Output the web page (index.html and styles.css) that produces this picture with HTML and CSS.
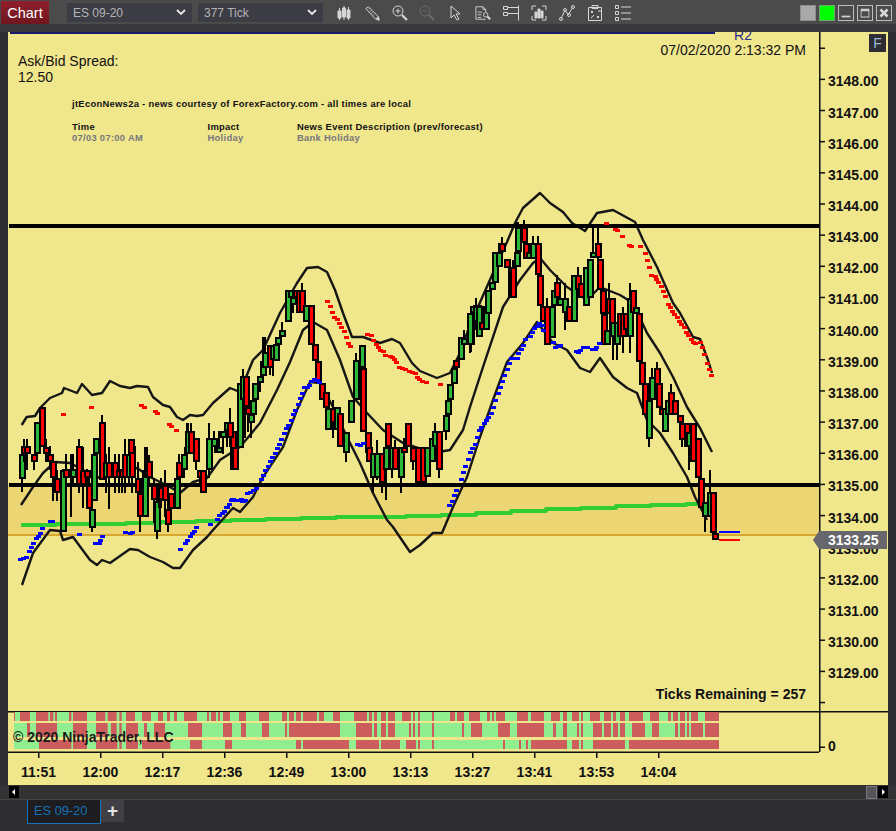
FILE: index.html
```html
<!DOCTYPE html>
<html lang="en">
<head>
<meta charset="utf-8">
<title>Chart - ES 09-20</title>
<link rel="stylesheet" href="styles.css">
</head>
<body>
<header class="toolbar">
  <button class="chart-btn">Chart</button>
  <div class="select"><span>ES 09-20</span><svg class="chev" viewBox="0 0 10 7"><path d="M1 1l4 4 4-4"/></svg></div>
  <div class="select"><span>377 Tick</span><svg class="chev" viewBox="0 0 10 7"><path d="M1 1l4 4 4-4"/></svg></div>
  <div class="tools">
    <svg class="tool" viewBox="0 0 16 16"><path class="fill" d="M2 6h3v7H2zM6.500 3h3v9h-3zM11 5h3v8h-3z"/><path d="M3.500 3v12M8 1v14M12.500 2v13"/></svg>
    <svg class="tool" viewBox="0 0 18 18"><path d="M2 4l3-2 11 11 1 4-4-1z"/><path d="M4 6l3-3M6 8l3-3M8 10l3-3M10 12l3-3" stroke-dasharray="1 1"/><path class="fill" d="M14 15l2-2 1 4z"/></svg>
    <svg class="tool" viewBox="0 0 16 16"><circle cx="6" cy="6" r="5"/><path d="M3.500 6h5M6 3.500v5"/><path class="thick" d="M10 10l5 5"/></svg>
    <svg class="tool dim" viewBox="0 0 16 16"><circle cx="6" cy="6" r="5"/><path d="M3.500 6h5"/><path class="thick" d="M10 10l5 5"/></svg>
    <svg class="tool narrow" viewBox="0 0 11 16"><path d="M1 1v12l3-3 3 5 2-1-3-5h4z"/></svg>
    <svg class="tool doc" viewBox="0 0 18 16"><path d="M1 1h8l3 3v3M1 1v14h11M9 1v3h3M3 7h5M3 10h4M3 13h4"/><circle cx="12" cy="10" r="2.500"/><path class="thick" d="M14 12l3 3"/></svg>
    <svg class="tool" viewBox="0 0 16 16"><path d="M0.500 1.500h4v3h-4zM0.500 7.500h4v3h-4zM4.500 2.500h11M4.500 8.500h11M15.500 0.500v15"/></svg>
    <svg class="tool" viewBox="0 0 16 16"><path d="M1 5V1h4M11 1h4v4M15 11v4h-4M5 15H1v-4"/><path class="fill" d="M4 7h2v6H4zM7 4h2v9H7zM10 6h2v7h-2z"/></svg>
    <svg class="tool" viewBox="0 0 16 16"><path d="M2 13.500L6 5.500 9.500 9.500 13.500 2.500"/><circle cx="2" cy="14" r="1.500"/><circle cx="6" cy="5" r="1.500"/><circle cx="10" cy="10" r="1.500"/><circle cx="14" cy="2" r="1.500"/></svg>
    <svg class="tool" viewBox="0 0 16 16"><path d="M1.500 2.500h13v13h-13zM5 0.500h6v3H5zM4 6l2 2M6 6l-2 2M10 11l2 2M12 11l-2 2M11 6h3M4 13l3-3"/></svg>
    <svg class="tool" viewBox="0 0 16 16"><path d="M0.500 0.500h3v3h-3zM0.500 6.500h3v3h-3zM0.500 12.500h3v3h-3zM6 2h10M6 8h10M6 14h10"/></svg>
  </div>
  <div class="win-btns">
    <span class="win-btn gray"></span>
    <span class="win-btn green"></span>
    <span class="win-btn"><svg viewBox="0 0 16 16"><path class="bar" d="M3 11h10v2H3z"/></svg></span>
    <span class="win-btn"><svg viewBox="0 0 16 16"><path class="bar" d="M3 3h10v10H3zM4 6v6h8V6z" fill-rule="evenodd"/></svg></span>
    <span class="win-btn"><svg viewBox="0 0 16 16"><path class="cross" d="M4 4l8 8M12 4l-8 8"/></svg></span>
  </div>
</header>
<div class="subbar"></div>

<main class="chart">
  <svg id="plot" class="plot" viewBox="8 32 880 752"></svg>

  <section class="pane">
    <div class="legend">
      <div class="spread">
        <div>Ask/Bid Spread:</div>
        <div>12.50</div>
        <div class="news">
          <p class="news-title">jtEconNews2a - news courtesy of ForexFactory.com - all times are local</p>
          <div class="news-grid">
            <b>Time</b><b>Impact</b><b>News Event Description (prev/forecast)</b>
            <i>07/03 07:00 AM</i><i>Holiday</i><i>Bank Holiday</i>
          </div>
        </div>
      </div>
      <div class="stamp">
        <div class="r2">R2</div>
        <div>07/02/2020 2:13:32 PM</div>
      </div>
    </div>
    <div class="ticks-left">Ticks Remaining = 257</div>
    <div class="copyright">© 2020 NinjaTrader, LLC</div>
  </section>

  <aside class="price-axis">
    <span>3148.00</span><span>3147.00</span><span>3146.00</span><span>3145.00</span><span>3144.00</span>
    <span>3143.00</span><span>3142.00</span><span>3141.00</span><span>3140.00</span><span>3139.00</span>
    <span>3138.00</span><span>3137.00</span><span>3136.00</span><span>3135.00</span><span>3134.00</span>
    <span>3133.00</span><span>3132.00</span><span>3131.00</span><span>3130.00</span><span>3129.00</span>
    <span class="zero">0</span>
  </aside>

  <footer class="time-axis">
    <span>11:51</span><span>12:00</span><span>12:17</span><span>12:36</span><span>12:49</span><span>13:00</span>
    <span>13:13</span><span>13:27</span><span>13:41</span><span>13:53</span><span>14:04</span>
  </footer>

  <div class="f-btn">F</div>
  <div class="last-price">3133.25</div>
</main>

<div class="scrollbar">
  <span class="arrow"><svg viewBox="0 0 10 12"><path d="M6 3v6L3 6z"/></svg></span>
  <span class="thumb"></span>
  <span class="arrow"><svg viewBox="0 0 10 12"><path d="M4 3v6l3-3z"/></svg></span>
</div>

<nav class="tabs">
  <span class="tab">ES 09-20</span>
  <span class="add">+</span>
</nav>
<script src="chart.js"></script>
</body>
</html>
```
FILE: styles.css
```css
* { box-sizing: border-box; }
html, body { margin: 0; height: 831px; overflow: hidden; }
body {
  background: #2e2e30;
  font-family: "Liberation Sans", Arial, sans-serif;
  display: flex;
  flex-direction: column;
}

/* toolbar */
.toolbar {
  height: 24px;
  flex: none;
  background: #4b4b4b;
  display: flex;
  align-items: center;
  padding: 1px 4px 0 1px;
}
.chart-btn {
  width: 48px;
  height: 23px;
  margin: 0 18px 0 0;
  padding: 0;
  border: 0;
  background: linear-gradient(#8f1f2b, #701620);
  color: #fff;
  font: 14.500px "Liberation Sans", Arial, sans-serif;
}
.select {
  width: 125px;
  height: 19px;
  margin-right: 6px;
  background: #3c3d44;
  color: #b4b4b8;
  font-size: 12px;
  display: flex;
  align-items: center;
  justify-content: space-between;
  padding: 0 6px;
}
.chev { width: 10px; height: 7px; fill: none; stroke: #e6e6e6; stroke-width: 1.800; }
.tools { display: flex; align-items: center; gap: 12px; margin-left: 7px; }
.tool { width: 16px; height: 16px; fill: none; stroke: #d6d6d6; stroke-width: 1; }
.tool.dim { margin-left: -1px; stroke: #6a6a6a; }
.tool.narrow { width: 11px; margin-left: 3px; }
.tool.doc { margin-left: 2px; }
.tool .fill { fill: #d6d6d6; }
.tool .thick { stroke-width: 2.200; }
.win-btns { margin-left: auto; display: flex; gap: 3px; }
.win-btn {
  width: 16px;
  height: 16px;
  border: 1px solid #bdbdbd;
  display: block;
}
.win-btn svg { display: block; width: 14px; height: 14px; }
.win-btn .bar { fill: #cfcfcf; }
.win-btn .cross { stroke: #d8d8d8; stroke-width: 3; fill: none; }
.win-btn.gray { background: #a9a9a9; border-color: #8c8c8c; }
.win-btn.green { background: #00ff00; border-color: #6fa86f; }
.subbar { height: 8px; flex: none; background: #39393b; }

/* chart */
.chart {
  position: relative;
  flex: none;
  width: 880px;
  height: 753px;
  margin-left: 8px;
  background: #f0e68c;
  overflow: hidden;
  display: grid;
  grid-template-columns: 811px 69px;
  grid-template-rows: 720px 33px;
}
.plot { position: absolute; left: 0; top: 0; width: 880px; height: 752px; }
.pane { position: relative; color: #111; }
.legend { position: relative; display: flex; justify-content: space-between; padding: 0 13px 0 10px; }
.spread { font-size: 14px; line-height: 16px; padding-top: 21px; }
.news {
  font-size: 9.400px;
  line-height: 11px;
  font-weight: 700;
  margin: 13px 0 0 54px;
}
.news-title { margin: 0 0 12px; letter-spacing: 0.300px; }
.news-grid {
  display: grid;
  grid-template-columns: 135.500px 89.500px auto;
  letter-spacing: 0.300px;
}
.news-grid b { font-weight: 700; }
.news-grid i { font-style: normal; color: #76767c; }
.stamp { font-size: 14px; line-height: 16px; text-align: right; }
.r2 { color: #2a2a90; margin: -5px 54px -1px 0; line-height: 16px; }
.ticks-left {
  position: absolute;
  right: 13px;
  top: 654px;
  font-size: 14px;
  line-height: 16px;
  font-weight: 700;
}
.copyright {
  position: absolute;
  left: 5px;
  top: 697px;
  font-size: 14px;
  line-height: 16px;
  font-weight: 700;
  color: #1a1a1a;
}
.price-axis {
  position: relative;
  display: flex;
  flex-direction: column;
  padding: 34.400px 0 0 9px;
  font-size: 14px;
  font-weight: 700;
  color: #111;
}
.price-axis span { height: 31.160px; line-height: 31.160px; flex: none; }
.price-axis .zero { margin-top: 48.400px; height: 16px; line-height: 16px; }
.time-axis {
  position: relative;
  grid-column: 1 / 3;
  display: grid;
  grid-template-columns: repeat(11, 62px);
  padding-top: 4px;
  margin-left: -0.500px;
  font-size: 14px;
  font-weight: 700;
  line-height: 32px;
  color: #111;
  text-align: center;
}
.f-btn {
  position: absolute;
  right: 2px;
  top: 2px;
  width: 17px;
  height: 18px;
  background: #2d2d33;
  color: #9db9d6;
  font-size: 14px;
  line-height: 18px;
  text-align: center;
}
.last-price {
  position: absolute;
  left: 805px;
  top: 499px;
  width: 74px;
  height: 18px;
  background: #66666c;
  clip-path: polygon(0 50%, 6px 0, 100% 0, 100% 100%, 6px 100%);
  color: #fff;
  font-size: 14px;
  font-weight: 700;
  line-height: 18px;
  padding-left: 15px;
}

/* bottom */
.scrollbar {
  flex: none;
  height: 15px;
  background: #333335;
  border-bottom: 1px solid #444;
  display: flex;
  align-items: flex-start;
  padding: 1px 8px 0 9px;
}
.arrow { width: 10px; height: 12px; background: #000; display: block; }
.arrow svg { display: block; width: 10px; height: 12px; fill: #fff; }
.thumb {
  width: 11px;
  height: 13px;
  margin: 0 1px 0 auto;
  background: #55555a;
  border: 1px solid #77777c;
}
.tabs { flex: 1; display: flex; padding-left: 27px; align-items: flex-start; }
.tab {
  width: 74px;
  height: 24px;
  background: #1d1d1f;
  border: 1px solid #1a6fb5;
  border-top: 0;
  color: #1a70b8;
  font-size: 12.800px;
  line-height: 21px;
  padding-left: 6px;
}
.add {
  width: 23px;
  height: 22px;
  background: #3f3f45;
  color: #e4e4e4;
  font-size: 19px;
  font-weight: 700;
  line-height: 21px;
  text-align: center;
}
```
FILE: chart.js
```js
(function () {
  var NS = "http://www.w3.org/2000/svg";
  var svg = document.getElementById("plot");

  function add(tag, attrs) {
    var el = document.createElementNS(NS, tag);
    for (var k in attrs) el.setAttribute(k, attrs[k]);
    svg.appendChild(el);
    return el;
  }
  function rect(x, y, w, h, fill) {
    add("rect", { x: x, y: y, width: w, height: h, fill: fill });
  }
  function line(pts, stroke, width) {
    add("polyline", {
      points: pts.map(function (p) { return p[0] + "," + p[1]; }).join(" "),
      fill: "none", stroke: stroke, "stroke-width": width, "stroke-linejoin": "round"
    });
  }

  var AXIS = 819, RIGHT = 888;

  /* price zone and level lines */
  rect(8, 485, AXIS - 8, 50, "#ecd673");
  rect(8, 534, AXIS - 8, 2, "#d9a72e");

  /* session range line along the top */
  rect(10, 32, 705, 2, "#1b1b6e");

  /* axes */
  rect(AXIS, 32, 1.500, 720, "#111");
  rect(8, 711, RIGHT - 8, 1.500, "#111");
  rect(8, 751.500, AXIS - 8, 1.500, "#111");
  rect(AXIS, 47.500, 6, 1.500, "#111");
  for (var p = 0; p <= 20; p++) rect(AXIS, 78.600 + p * 31.160, 6, 1.500, "#111");
  rect(AXIS, 746.500, 6, 1.500, "#111");
  for (var t = 0; t < 11; t++) rect(38 + t * 62, 752, 1.500, 6, "#111");

  /* heat strips */
  var strips = [
    { y: 712, h: 9, a: [[42,45],[60,90],[108,145],[150,160],[165,171],[207,214],[219,261],[288,316],[323,350],[358,365],[378,405],[426,453],[474,489],[501,510],[522,531],[552,591],[621,627],[633,648],[654,660],[669,690],[717,738],[777,807],[846,861],[867,882],[888,903],[909,951],[957,972],[999,1020],[1062,1101],[1107,1116],[1122,1131],[1143,1158],[1164,1185],[1206,1233],[1239,1245],[1254,1260],[1296,1302]],
      b: [[12,27],[33,54],[69,102],[123,132],[138,144],[150,177],[213,246],[255,294],[315,342],[351,363],[378,399],[405,411],[432,462],[474,495],[501,510],[522,537],[549,591],[612,639],[666,675],[681,696],[702,717],[723,729],[735,756],[777,819]] },
    { y: 723, h: 14, a: [[81,90],[108,171],[219,261],[288,323],[333,350],[358,365],[378,414],[432,441],[462,495],[564,606],[669,696],[723,738],[786,807],[855,861],[867,1020],[1068,1116],[1122,1131],[1143,1158],[1164,1185],[1227,1233],[1239,1245],[1254,1260],[1296,1302]],
      b: [[48,54],[75,108],[156,192],[213,294],[321,330],[351,363],[393,399],[405,411],[441,468],[474,495],[501,516],[522,537],[558,597],[618,639],[687,696],[702,717],[723,729],[735,771],[777,819]] },
    { y: 740, h: 9, a: [[117,214],[219,261],[288,352],[358,365],[378,414],[426,511],[570,606],[675,696],[888,903],[909,1047],[1068,1137],[1143,1200],[1218,1248],[1254,1260],[1296,1302]],
      b: [[171,177],[219,225],[240,246],[255,363],[378,399],[405,411],[441,537],[549,819]] }
  ];
  strips.forEach(function (s) {
    rect(14, s.y, 705, s.h, "#90ee90");
    s.a.forEach(function (r) { rect(r[0] / 3, s.y, (r[1] - r[0]) / 3, s.h, "#cd5c5c"); });
    s.b.forEach(function (r) { rect(446 + r[0] / 3, s.y, (r[1] - r[0]) / 3, s.h, "#cd5c5c"); });
  });

  /* slow moving average: stepped */
  var avg = [[21,524.500],[115,523.500],[210,521],[300,518],[440,515.500],[540,509],[710,503]];
  var steps = [], seg = 0;
  for (var x = 21; x < 710; x += 35) {
    while (avg[seg + 1][0] < x) seg++;
    var f = (x - avg[seg][0]) / (avg[seg + 1][0] - avg[seg][0]);
    var y = Math.round(avg[seg][1] + f * (avg[seg + 1][1] - avg[seg][1]));
    steps.push([x, y], [Math.min(x + 35, 710), y]);
  }
  line(steps, "#32cd32", 4);

  /* envelope curves */
  var upper = [[21.700,425],[26.700,417],[35,416],[40,408],[50,398],[62,393],[64,388],[77,393],[82,384],[92,395],[102,393],[110,381],[120,386],[130,388],[137,386],[148,387],[153,397],[163,405],[170,407],[177,417],[183,420],[190,415],[197,416],[203,415],[213,403],[230,388],[240,392],[253,360],[263,350],[280,313],[297,283],[307,268],[318,267],[327,272],[335,290],[343,313],[352,337],[363,337],[380,343],[392,339],[400,343],[412,363],[420,371],[437,378],[450,373],[460,353],[470,325],[493,273],[507,242],[515,223],[523,208],[540,193],[550,203],[563,212],[572,223],[585,231],[597,213],[613,210],[635,222],[643,240],[657,267],[673,303],[680,313],[693,337],[700,339],[708,360],[712,373]];
  var middle = [[21,505],[33,487],[43,473],[55,462],[70,463],[83,470],[97,478],[113,473],[137,468],[150,477],[170,487],[180,493],[193,482],[207,478],[220,460],[240,447],[260,423],[277,390],[290,362],[303,330],[313,322],[327,330],[340,360],[353,397],[367,413],[383,430],[403,443],[433,453],[450,450],[463,430],[470,407],[483,367],[503,307],[520,280],[533,263],[540,258],[550,270],[567,287],[587,300],[600,287],[620,295],[633,303],[647,333],[660,353],[673,377],[687,407],[700,428],[712,452]];
  var lower = [[22,585],[33,553],[50,530],[60,531],[63,540],[73,537],[90,560],[97,565],[102,560],[110,563],[130,549],[138,550],[150,557],[163,562],[173,568],[180,568],[193,550],[207,537],[213,530],[233,508],[240,512],[253,497],[263,477],[283,447],[297,410],[310,382],[320,383],[333,407],[347,437],[360,463],[373,493],[387,520],[393,527],[410,552],[420,545],[433,533],[442,533],[453,507],[467,477],[480,437],[493,400],[507,362],[523,343],[537,322],[553,343],[567,350],[580,368],[590,372],[600,358],[613,377],[627,388],[637,393],[647,420],[660,433],[673,453],[687,477],[695,497],[707,520]];
  [upper, middle, lower].forEach(function (c) { line(c, "#161616", 2.400); });

  /* level lines */
  rect(9, 224, AXIS - 9, 4, "#000");
  rect(9, 483, AXIS - 9, 4, "#000");

  /* candles: [x, high, top, bottom, low, colour], in crop pixels (3x) */
  var G = "#2eb83a", R = "#ff0000";
  var crops = [
    { ox: 10, oy: 395, bars: [
      [36,177,177,252,292,G],[42,132,153,177,200,R],[51,132,153,177,225,R],[72,177,177,200,225,R],[81,80,82,177,177,G],
      [96,36,36,157,157,R],[108,132,157,177,200,R],[120,152,177,200,225,R],[129,198,198,248,318,R],[141,225,248,293,318,R],
      [159,222,225,410,410,G],[168,177,222,250,270,R],[183,177,222,250,365,G],[190,177,222,250,270,G],[207,132,153,270,295,R],
      [219,155,225,270,340,R],[231,222,225,250,290,R],[238,250,270,342,342,R],[246,342,342,400,410,G],[252,130,177,318,318,G],
      [258,130,130,177,177,G],[276,60,82,255,255,R],[288,177,200,250,295,G],[297,155,200,250,342,R],[315,177,200,250,295,R],
      [327,177,225,250,295,R],[337,222,222,250,295,R],[345,132,177,250,295,R],[357,132,177,250,275,G]
    ]},
    { ox: 125, oy: 395, bars: [
      [22,132,153,250,295,R],[18,132,132,177,177,R],[38,200,250,295,345,R],[44,250,295,365,410,R],[60,155,225,365,365,G],
      [66,155,198,250,250,R],[72,180,198,250,270,R],[87,250,270,315,385,R],[97,315,318,412,433,G],[102,270,270,315,340,G],
      [109,250,275,315,340,R],[120,225,270,318,365,R],[130,295,342,390,410,R],[138,295,295,342,365,R],[155,200,250,342,342,G],
      [162,178,200,250,250,R],[177,178,178,225,250,G],[186,85,155,178,178,G],[188,85,108,178,178,G],[198,85,108,178,178,R],
      [213,130,130,200,225,R],[225,225,225,250,270,R],[234,225,225,293,293,R],[252,85,130,225,250,G],[267,108,130,155,155,G],
      [276,130,155,175,175,G],[282,108,155,175,175,G],[294,108,108,130,155,G],[306,85,108,130,155,G],[315,40,85,105,155,R],
      [324,108,108,222,225,R],[342,130,130,155,155,G],[350,0,0,130,130,G]
    ]},
    { ox: 220, oy: 250, bars: [
      [8,543,543,565,612,G],[20,517,517,543,580,G],[30,475,517,565,590,R],[40,590,590,660,660,R],[46,590,590,660,660,R],
      [60,400,400,595,595,G],[70,358,378,450,470,G],[78,378,378,470,470,R],[85,470,470,495,545,R],[92,450,492,520,565,G],
      [100,450,450,495,495,G],[105,400,400,450,450,G],[120,378,378,400,425,G],[130,262,332,378,378,G],[135,262,307,355,355,G],
      [150,285,285,355,375,R],[158,285,285,330,378,G],[168,283,283,332,332,G],[175,260,260,285,285,G],[185,215,240,262,262,G],
      [203,120,120,217,217,G],[212,120,120,145,145,G],[220,120,140,165,190,G],[227,120,120,145,145,R],[238,120,120,190,190,R],
      [246,100,120,190,190,R],[257,165,165,215,215,G],[274,165,165,285,285,R],[285,283,283,332,332,R],[295,332,332,400,400,R],
      [305,400,400,450,450,R],[318,425,425,475,500,R],[325,475,475,540,540,G],[340,450,475,520,565,R],[350,470,470,540,540,G],
      [360,490,490,590,590,R],[378,545,545,610,635,G],[392,450,450,520,520,G],[408,310,330,450,450,G],[425,285,285,355,355,G],
      [430,355,355,545,545,R],[443,545,545,610,610,R],[447,590,590,635,635,R],[458,610,610,685,730,G],[472,570,610,685,690,G],
      [485,610,610,700,730,R],[497,520,590,660,750,G],[503,520,520,590,590,R],[515,590,590,660,685,G],[525,570,590,660,660,R],
      [543,590,590,685,728,G],[553,565,590,610,635,R],[565,520,520,590,590,R],[580,590,590,635,660,R],[595,590,590,700,700,R],
      [610,590,590,700,700,R],[622,590,590,680,680,G],[635,565,565,635,635,G],[645,520,543,590,590,G],[658,543,543,660,685,R],
      [678,495,495,545,570,G],[684,450,450,495,495,G],[690,402,402,450,450,G],[702,355,355,402,402,G],[708,330,330,355,355,R],
      [722,262,262,330,330,G],[732,240,265,285,310,G],[752,190,190,285,305,G],[768,145,165,190,190,G],[775,165,165,240,260,R]
    ]},
    { ox: 460, oy: 180, bars: [
      [30,400,400,495,518,G],[38,378,378,400,400,G],[47,355,378,425,450,G],[58,378,378,470,470,G],[66,425,425,450,470,R],
      [78,378,378,450,450,G],[85,330,330,402,402,G],[95,305,305,330,330,G],[105,215,215,310,310,G],[118,190,215,260,260,G],
      [126,170,190,215,260,R],[142,237,237,265,265,R],[153,262,262,355,355,R],[160,240,262,355,355,R],[170,125,215,262,262,G],
      [175,125,140,215,215,G],[192,120,140,190,190,R],[197,190,190,237,237,R],[207,215,215,237,237,G],[220,168,190,237,237,G],
      [234,168,190,285,285,R],[240,285,285,378,378,R],[250,378,378,425,425,R],[262,355,378,495,495,R],[275,378,378,475,475,G],
      [282,330,330,378,378,G],[292,285,307,355,355,R],[300,355,355,378,378,G],[315,308,355,400,450,G],[328,378,378,425,425,R],
      [342,285,285,425,425,G],[355,262,285,330,330,R],[362,310,310,355,355,R],[378,260,260,378,378,G],[390,237,237,355,355,G],
      [400,140,215,235,235,G],[413,140,190,235,260,R],[420,237,237,330,330,R],[428,330,330,402,402,R],[433,402,402,495,495,R],
      [440,450,450,495,495,G],[447,308,355,402,402,R],[455,355,355,470,470,R],[460,425,425,470,540,G],[472,425,425,495,540,G],
      [480,400,400,470,470,R],[490,380,400,470,518,R],[498,400,400,450,450,R],[510,308,355,470,518,G],[520,330,330,400,400,R],
      [528,380,380,402,402,G],[537,400,400,545,545,R],[545,545,545,615,615,R],[555,610,610,705,705,R],[567,610,660,778,800,G],
      [575,565,590,660,660,G],[590,545,565,640,640,R],[598,610,610,685,685,R],[605,685,685,705,705,R],[615,685,685,755,755,G],
      [625,660,660,705,750,G],[632,612,635,705,705,R],[645,660,660,705,705,R],[660,705,705,730,730,R],[665,730,730,780,800,R],
      [680,730,730,800,800,R],[687,755,755,800,870,G],[700,730,730,845,845,R],[715,775,775,895,895,R],[723,870,893,985,985,R],
      [735,965,965,1010,1055,G],[750,870,937,1010,1010,G],[758,937,937,1060,1060,R],[765,1060,1060,1080,1080,R]
    ]}
  ];
  crops.forEach(function (c) {
    c.bars.forEach(function (b) {
      var x = Math.round(c.ox + b[0] / 3);
      var hi = Math.round(c.oy + b[1] / 3), top = Math.round(c.oy + b[2] / 3),
          bot = Math.round(c.oy + b[3] / 3), lo = Math.round(c.oy + b[4] / 3);
      rect(x - 1, hi, 2, lo - hi, "#000");
      rect(x - 3, top, 7, bot - top, "#000");
      if (bot - top > 4) rect(x - 1, top + 2, 3, bot - top - 4, b[5]);
    });
  });

  /* trailing dots, in crop pixels (3x) */
  var dots = [
    { ox: 0, oy: 380, c: R, p: [[190,103],[274,82],[424,76],[433,82],[466,94],[472,100],[508,133],[514,139],[529,151]] },
    { ox: 220, oy: 250, c: R, p: [[322,154],[331,169],[337,187],[343,202],[352,208],[358,220],[364,232],[373,244],[379,262],[385,280],[391,289],[442,253],[454,256],[460,271],[469,283],[475,292],[481,301],[490,304],[496,316],[511,319],[517,322],[523,328],[529,337],[538,352],[547,355],[556,358],[568,364],[577,367],[586,370],[592,382],[598,388],[607,394],[619,397],[661,403]] },
    { ox: 460, oy: 180, c: R, p: [[439,129],[466,148],[472,151],[487,169],[508,196],[514,199],[541,199],[556,220],[562,241],[568,262],[574,286],[586,289],[589,298],[595,307],[604,319],[610,334],[616,349],[625,373],[631,382],[637,394],[643,403],[652,412],[658,424],[664,433],[673,442],[679,457],[685,466],[694,478],[700,487],[706,490],[721,487],[727,502],[733,523],[742,550],[748,568],[754,586]] },
    { ox: 0, oy: 380, c: "#0000ff", p: [[60,538],[70,535],[79,530],[88,514],[94,502],[100,490],[109,475],[115,468],[121,460],[127,445],[150,424],[157,424],[238,463],[285,490],[296,490],[301,481],[307,469],[375,457],[390,460],[397,457],[541,508],[556,490],[562,481],[571,469],[577,460],[583,454],[589,442],[630,431],[652,417],[658,406],[667,400],[673,394],[679,382],[688,373],[694,360],[700,358],[718,360],[727,363],[736,361]] },
    { ox: 220, oy: 250, c: "#0000ff", p: [[6,790],[12,784],[20,772],[28,762],[36,748],[48,751],[62,748],[68,754],[76,751],[82,730],[91,727],[100,721],[109,715],[124,688],[130,676],[136,661],[145,649],[151,634],[157,622],[166,610],[172,595],[178,583],[184,568],[193,550],[199,535],[205,526],[214,511],[220,493],[226,481],[235,463],[241,445],[247,430],[253,412],[262,412],[268,406],[274,394],[283,388],[292,391],[298,397],[412,583],[421,586],[430,580],[688,766],[697,754],[703,736],[709,721],[724,688],[730,667],[736,649],[745,628],[751,607],[757,595],[766,583],[772,562],[778,541]] },
    { ox: 460, oy: 180, c: "#0000ff", p: [[4,898],[10,877],[16,859],[25,838],[31,817],[37,805],[46,793],[52,772],[58,751],[64,742],[73,730],[79,721],[85,712],[94,700],[100,682],[106,661],[115,640],[121,622],[127,604],[133,586],[142,568],[148,550],[154,535],[163,535],[172,535],[175,520],[184,508],[190,496],[196,478],[211,469],[217,457],[223,445],[232,439],[238,430],[247,436],[250,451],[280,487],[286,502],[295,499],[301,496],[349,514],[355,517],[361,511],[370,502],[382,502],[397,508],[406,508],[409,502],[418,490]] }
  ];
  dots.forEach(function (d) {
    d.p.forEach(function (q) {
      rect(Math.round(d.ox + q[0] / 3) - 2, Math.round(d.oy + q[1] / 3) - 1, 5, 3, d.c);
    });
  });

  /* last bid and ask ticks */
  rect(719, 531, 21, 2, "#0000ff");
  rect(719, 539, 21, 2, "#ff0000");
})();
```
